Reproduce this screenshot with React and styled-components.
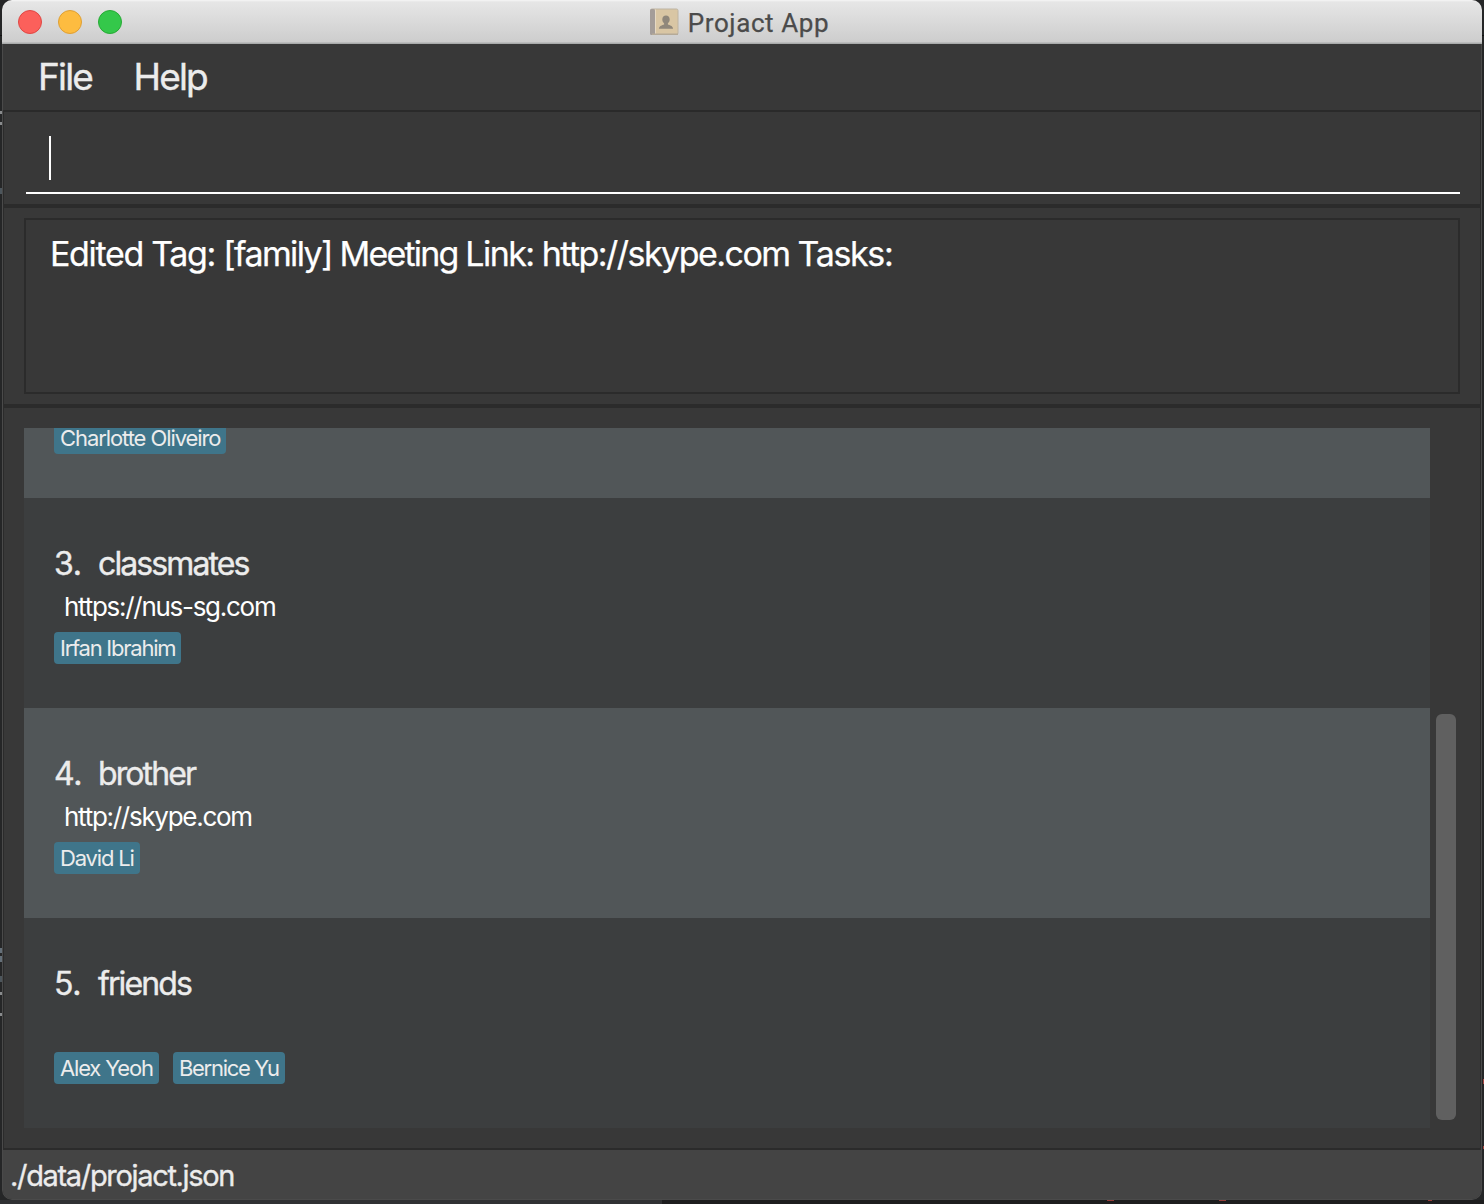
import React from "react";
import styled, { createGlobalStyle } from "styled-components";

const GlobalStyle = createGlobalStyle`
  * { box-sizing: border-box; }
  body { margin: 0; background: #232425; overflow: hidden; }
`;

const Desktop = styled.div`
  width: 1484px;
  height: 1204px;
  padding: 0 2px 4px;
  background:
    linear-gradient(#111, #111) 0 35px / 100% 1px no-repeat,
    linear-gradient(#8a8c8e, #8a8c8e) 0 111px / 2px 3px no-repeat,
    linear-gradient(#8a8c8e, #8a8c8e) 0 122px / 2px 3px no-repeat,
    linear-gradient(#4d565c, #4d565c) 0 188px / 2px 6px no-repeat,
    linear-gradient(#657079, #657079) 0 948px / 2px 5px no-repeat,
    linear-gradient(#657079, #657079) 0 956px / 2px 6px no-repeat,
    linear-gradient(#4d565c, #4d565c) 0 976px / 2px 6px no-repeat,
    linear-gradient(#8a8c8e, #8a8c8e) 0 992px / 2px 3px no-repeat,
    linear-gradient(#8a8c8e, #8a8c8e) 0 1013px / 2px 3px no-repeat,
    linear-gradient(#a64540, #a64540) 1483px 1079px / 1px 5px no-repeat,
    linear-gradient(#a64540, #a64540) 1483px 1146px / 1px 3px no-repeat,
    linear-gradient(#963e3b, #963e3b) 1107px 1200px / 7px 1px no-repeat,
    linear-gradient(#963e3b, #963e3b) 1219px 1200px / 7px 1px no-repeat,
    linear-gradient(#963e3b, #963e3b) 1428px 1200px / 4px 1px no-repeat,
    linear-gradient(90deg, #303133 662px, #1d1d1e 662px) 0 1200px / 100% 4px no-repeat,
    #252627;
  font-family: Inter, "Liberation Sans", sans-serif;
  color: #ececec;
`;

const Window = styled.div`
  height: 1200px;
  border-radius: 10px;
  overflow: hidden;
  background: #383838;
  display: flex;
  flex-direction: column;
`;

const TitleBar = styled.header`
  height: 44px;
  flex: none;
  display: grid;
  grid-template-columns: 1fr auto 1fr;
  align-items: center;
  padding: 0 21px 0 16px;
  background: linear-gradient(#f6f6f6 0, #e6e6e6 2px, #cdcdcd 42px, #a9abab 43px);
`;

const Lights = styled.div`
  display: flex;
  gap: 16px;
`;

const Light = styled.span`
  width: 24px;
  height: 24px;
  border-radius: 50%;
  background: ${(p) => p.$fill};
  border: 1px solid ${(p) => p.$edge};
`;

const Title = styled.div`
  display: flex;
  align-items: center;
  gap: 9px;
  height: 44px;
`;

const TitleText = styled.span`
  padding-top: 2px;
  font-family: Roboto, Inter, sans-serif;
  font-size: 26px;
  line-height: 42px;
  letter-spacing: 0.6px;
  color: #4b4b4b;
  -webkit-text-stroke: 0.25px #4b4b4b;
  white-space: nowrap;
`;

const Body = styled.div`
  flex: 1;
  display: flex;
  flex-direction: column;
  border: solid #4a4a4a;
  border-width: 0 1px 1px;
  border-radius: 0 0 10px 10px;
  overflow: hidden;
`;

const MenuBar = styled.nav`
  height: 68px;
  flex: none;
  display: flex;
  gap: 41.3px;
  padding-left: 35px;
  border-bottom: 2px solid #2a2a2a;
`;

const MenuItem = styled.span`
  font-size: 37px;
  line-height: 66px;
  letter-spacing: -1.8px;
  -webkit-text-stroke: 0.4px #ececec;
`;

const Pane = styled.section`
  flex: none;
  height: ${(p) => p.$h}px;
  padding: ${(p) => p.$pad};
  border: solid #2b2b2b;
  border-width: 0 1px ${(p) => p.$rule}px;
`;

const CommandField = styled.div`
  height: 70px;
  padding: 12px 0 0 23px;
  border-bottom: 2px solid #fff;
`;

const Caret = styled.div`
  width: 2px;
  height: 44px;
  background: #fff;
`;

const ResultBox = styled.div`
  height: 176px;
  border: 2px solid #2b2b2b;
  padding: 12px 24px;
  font-size: 34px;
  line-height: 44px;
  color: #fff;
  white-space: pre;
  -webkit-text-stroke: 0.25px #fff;
`;

const Run = styled.span`
  letter-spacing: ${(p) => p.$track}px;
`;

const ListArea = styled.div`
  display: flex;
  gap: 6px;
  height: 700px;
`;

const List = styled.div`
  width: 1406px;
  height: 700px;
  overflow: hidden;
  display: flex;
  flex-direction: column;
  justify-content: flex-end;
`;

const Card = styled.article`
  height: 210px;
  flex: none;
  padding: 44px 30px 0;
  background: ${(p) => (p.$even ? "#515658" : "#3c3e3f")};
`;

const Heading = styled.div`
  display: flex;
  height: 42px;
  font-size: 32px;
  line-height: 43px;
  -webkit-text-stroke: 0.4px #ececec;
`;

const Index = styled.span`
  width: 44px;
  letter-spacing: -0.3px;
`;

const Name = styled.span`
  letter-spacing: -1.9px;
`;

const Link = styled.div`
  height: 48px;
  padding-left: 10px;
  font-size: 26px;
  line-height: 46px;
  letter-spacing: -1.28px;
  color: #fff;
`;

const Tags = styled.div`
  display: flex;
  gap: 14px;
`;

const Tag = styled.span`
  width: ${(p) => p.$w}px;
  height: 32px;
  padding-left: 6px;
  border-radius: 4px;
  background: #3f758a;
  font-size: 22px;
  line-height: 32px;
  letter-spacing: ${(p) => p.$track}px;
  white-space: nowrap;
`;

const ScrollTrack = styled.div`
  width: 20px;
  padding-top: 286px;
`;

const ScrollThumb = styled.div`
  height: 406px;
  border-radius: 6px;
  background: #606060;
`;

const StatusBar = styled.footer`
  flex: 1;
  background: #444;
  padding-left: 7px;
  font-size: 29px;
  line-height: 52px;
  letter-spacing: -1.33px;
  -webkit-text-stroke: 0.35px #ececec;
`;

function AddressBookIcon() {
  return (
    <svg width="29" height="28" viewBox="0 0 29 28">
      <rect x="0.5" y="1" width="27.5" height="25.5" rx="1.5" fill="#d9c6a4" stroke="#beb4a2" />
      <rect x="0" y="1" width="5" height="26" rx="1.5" fill="#a49d99" />
      <rect x="5" y="1.5" width="1" height="25" fill="#e6d9c4" />
      <rect x="2" y="25.5" width="26" height="1.5" fill="#b5aa98" />
      <path d="M16 7.500c2.200 0 3.700 1.500 3.700 3.900 0 1.700-.8 3-1.800 3.800v1.300c1.800.8 5 1.200 5.200 4.200H8.900c.2-3 3.400-3.400 5.200-4.200v-1.300c-1-.8-1.800-2.100-1.800-3.800 0-2.400 1.500-3.900 3.700-3.900z" fill="#8f877b" />
    </svg>
  );
}

const message = [
  ["Edited Tag: ", -1.33],
  ["[family] ", -1.64],
  ["Meeting ", -1.82],
  ["Link: ", -1.53],
  ["http://skype.com ", -1.53],
  ["Tasks:", -1.35],
];

const groups = [
  { n: 2, name: "", link: "", tags: [["Charlotte Oliveiro", 172, -1.08]] },
  { n: 3, name: "classmates", link: "https://nus-sg.com", tags: [["Irfan Ibrahim", 127, -1.25]] },
  { n: 4, name: "brother", link: "http://skype.com", tags: [["David Li", 86, -1.17]] },
  { n: 5, name: "friends", link: "", tags: [["Alex Yeoh", 105, -1.17], ["Bernice Yu", 112, -1.3]] },
];

export default function App() {
  return (
    <Desktop>
      <GlobalStyle />
      <Window>
        <TitleBar>
          <Lights>
            <Light $fill="#fc605b" $edge="#df4744" />
            <Light $fill="#fdbc40" $edge="#de9f34" />
            <Light $fill="#34c84a" $edge="#27aa35" />
          </Lights>
          <Title>
            <AddressBookIcon />
            <TitleText>Projact App</TitleText>
          </Title>
        </TitleBar>
        <Body>
          <MenuBar>
            <MenuItem>File</MenuItem>
            <MenuItem>Help</MenuItem>
          </MenuBar>
          <Pane $h={96} $pad="12px 20px 0 22px" $rule={4}>
            <CommandField>
              <Caret />
            </CommandField>
          </Pane>
          <Pane $h={200} $pad="10px 20px 0 20px" $rule={4}>
            <ResultBox>
              {message.map(([text, track]) => (
                <Run key={text} $track={track}>{text}</Run>
              ))}
            </ResultBox>
          </Pane>
          <Pane $h={742} $pad="20px 20px 0 20px" $rule={2}>
            <ListArea>
              <List>
                {groups.map((g) => (
                  <Card key={g.n} $even={g.n % 2 === 0}>
                    <Heading>
                      {g.name && <Index>{g.n}.</Index>}
                      <Name>{g.name}</Name>
                    </Heading>
                    <Link>{g.link}</Link>
                    <Tags>
                      {g.tags.map(([label, w, track]) => (
                        <Tag key={label} $w={w} $track={track}>{label}</Tag>
                      ))}
                    </Tags>
                  </Card>
                ))}
              </List>
              <ScrollTrack>
                <ScrollThumb />
              </ScrollTrack>
            </ListArea>
          </Pane>
          <StatusBar>./data/projact.json</StatusBar>
        </Body>
      </Window>
    </Desktop>
  );
}
